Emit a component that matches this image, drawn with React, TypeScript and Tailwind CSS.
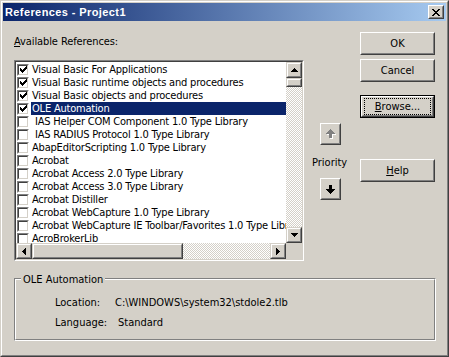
import React from "react"

// pixel patterns for the little classic glyphs
const CHECK = ["......X", ".....XX", "X...XXX", "XX.XXX.", "XXXXX..", ".XXX...", "..X...."]
const CLOSE = ["XX....XX", ".XX..XX.", "..XXXX..", "...XX...", "..XXXX..", ".XX..XX.", "XX....XX"]
const TRI_UP = ["...X...", "..XXX..", ".XXXXX.", "XXXXXXX"]
const TRI_DOWN = ["XXXXXXX", ".XXXXX.", "..XXX..", "...X..."]
const TRI_LEFT = ["...X", "..XX", ".XXX", "XXXX", ".XXX", "..XX", "...X"]
const TRI_RIGHT = ["X...", "XX..", "XXX.", "XXXX", "XXX.", "XX..", "X..."]
const ARROW_UP = ["....X....", "...XXX...", "..XXXXX..", ".XXXXXXX.", "XXXXXXXXX", "...XXX...", "...XXX...", "...XXX...", "...XXX..."]
const ARROW_DOWN = [...ARROW_UP].reverse()

function Pix({ rows, color = "#000", shadow }: { rows: string[]; color?: string; shadow?: string }) {
  const w = rows[0].length + (shadow ? 1 : 0)
  const h = rows.length + (shadow ? 1 : 0)
  const cells: React.ReactNode[] = []
  const draw = (dx: number, fill: string, key: string) =>
    rows.forEach((r, y) =>
      r.split("").forEach((c, x) => {
        if (c === "X") cells.push(<rect key={key + x + "-" + y} x={x + dx} y={y + dx} width={1} height={1} fill={fill} />)
      })
    )
  if (shadow) draw(1, shadow, "s")
  draw(0, color, "m")
  return (
    <svg width={w} height={h} viewBox={`0 0 ${w} ${h}`} shapeRendering="crispEdges" className="block">
      {cells}
    </svg>
  )
}

// raised push button bevel
function PushButton({ children, className = "" }: { children?: React.ReactNode; className?: string }) {
  return (
    <div className={"border border-t-white border-l-white border-r-[#404040] border-b-[#404040] bg-[#d4d0c8] " + className}>
      <div className="h-full w-full border border-t-[#d4d0c8] border-l-[#d4d0c8] border-r-[#808080] border-b-[#808080] flex items-center justify-center">
        {children}
      </div>
    </div>
  )
}

// scrollbar button / thumb bevel
function ScrollPart({ children, className = "" }: { children?: React.ReactNode; className?: string }) {
  return (
    <div className={"border border-t-[#d4d0c8] border-l-[#d4d0c8] border-r-[#404040] border-b-[#404040] bg-[#d4d0c8] " + className}>
      <div className="h-full w-full border border-t-white border-l-white border-r-[#808080] border-b-[#808080] flex items-center justify-center">
        {children}
      </div>
    </div>
  )
}

function CheckBox({ checked }: { checked?: boolean }) {
  return (
    <div className="ml-[1px] w-[12px] h-[12px] shrink-0 border border-t-[#808080] border-l-[#808080] border-r-white border-b-white">
      <div className="h-full w-full border border-t-[#404040] border-l-[#404040] border-r-[#d4d0c8] border-b-[#d4d0c8] bg-white flex items-center justify-center">
        {checked && <Pix rows={CHECK} />}
      </div>
    </div>
  )
}

const refs = [
  { t: "Visual Basic For Applications", c: true },
  { t: "Visual Basic runtime objects and procedures", c: true },
  { t: "Visual Basic objects and procedures", c: true },
  { t: "OLE Automation", c: true, sel: true },
  { t: " IAS Helper COM Component 1.0 Type Library" },
  { t: " IAS RADIUS Protocol 1.0 Type Library" },
  { t: "AbapEditorScripting 1.0 Type Library" },
  { t: "Acrobat" },
  { t: "Acrobat Access 2.0 Type Library" },
  { t: "Acrobat Access 3.0 Type Library" },
  { t: "Acrobat Distiller" },
  { t: "Acrobat WebCapture 1.0 Type Library" },
  { t: "Acrobat WebCapture IE Toolbar/Favorites 1.0 Type Library" },
  { t: "AcroBrokerLib" },
]

const dither = "bg-[conic-gradient(#ffffff_25%,#d4d0c8_0_50%,#ffffff_0_75%,#d4d0c8_0)] bg-[length:2px_2px]"

export default function App() {
  return (
    <div className="w-[449px] h-[357px] border border-t-[#d4d0c8] border-l-[#d4d0c8] border-r-[#404040] border-b-[#404040] font-['DejaVu_Sans_Condensed','Liberation_Sans',Arial,sans-serif] text-[11px] leading-[13px] text-black select-none">
      <div className="h-full border border-t-white border-l-white border-r-[#808080] border-b-[#808080] bg-[#d4d0c8] p-[1px] flex flex-col">
        {/* Title bar */}
        <div className="h-[18px] shrink-0 flex items-center bg-[linear-gradient(to_right,#0a246a,#a6caf0)] pl-[2px] pr-[2px]">
          <span className="flex-1 text-white font-bold tracking-[0.4px] leading-[18px] font-['Liberation_Sans',Arial,sans-serif]">References - Project1</span>
          <PushButton className="w-[16px] h-[14px]">
            <Pix rows={CLOSE} />
          </PushButton>
        </div>

        {/* Client */}
        <div className="flex-1 pl-[11px] pt-[11px]">
          <div className="flex items-start">
            {/* Available references */}
            <div className="w-[290px] flex flex-col">
              <div className="mt-[3px] h-[13px] tracking-[-0.1px]">
                <u>A</u>vailable References:
              </div>
              <div className="mt-[12px] h-[201px] border border-t-[#808080] border-l-[#808080] border-r-white border-b-white">
                <div className="h-full border border-t-[#404040] border-l-[#404040] border-r-[#d4d0c8] border-b-[#d4d0c8] flex flex-col">
                  <div className="flex h-[181px]">
                    <div className="w-[270px] bg-white pt-[1px] overflow-hidden tracking-[-0.2px]">
                      {refs.map((r) => (
                        <div key={r.t} className="h-[13px] flex items-center">
                          <CheckBox checked={r.c} />
                          <div
                            className={
                              "ml-[2px] pl-[1px] flex-1 min-w-0 h-[13px] whitespace-pre overflow-hidden " +
                              (r.sel ? "bg-[#0a246a] text-white" : "")
                            }
                          >
                            {r.t}
                          </div>
                        </div>
                      ))}
                    </div>
                    <div className="w-[16px] flex flex-col">
                      <ScrollPart className="h-[16px]">
                        <Pix rows={TRI_UP} />
                      </ScrollPart>
                      <ScrollPart className="h-[9px]" />
                      <div className={"flex-1 " + dither} />
                      <ScrollPart className="h-[16px]">
                        <Pix rows={TRI_DOWN} />
                      </ScrollPart>
                    </div>
                  </div>
                  <div className="flex h-[16px]">
                    <ScrollPart className="w-[16px]">
                      <Pix rows={TRI_LEFT} />
                    </ScrollPart>
                    <ScrollPart className="w-[151px]" />
                    <div className={"flex-1 " + dither} />
                    <ScrollPart className="w-[16px]">
                      <Pix rows={TRI_RIGHT} />
                    </ScrollPart>
                    <div className="w-[16px] bg-[#d4d0c8]" />
                  </div>
                </div>
              </div>
            </div>

            {/* Priority */}
            <div className="ml-[8px] w-[36px] flex flex-col">
              <PushButton className="mt-[91px] ml-[8px] w-[21px] h-[22px]">
                <Pix rows={ARROW_UP} color="#808080" shadow="#ffffff" />
              </PushButton>
              <div className="mt-[11px] h-[13px]">Priority</div>
              <PushButton className="mt-[9px] ml-[8px] w-[21px] h-[22px]">
                <Pix rows={ARROW_DOWN} />
              </PushButton>
            </div>

            {/* Buttons */}
            <div className="ml-[12px] w-[75px] flex flex-col">
              <PushButton className="h-[23px]">OK</PushButton>
              <PushButton className="mt-[4px] h-[23px]">Cancel</PushButton>
              <div className="mt-[13px] h-[23px] border border-black">
                <PushButton className="h-full">
                  <div className="h-full w-full m-[1px] border border-dotted border-black flex items-center justify-center">
                    <span>
                      <u>B</u>rowse...
                    </span>
                  </div>
                </PushButton>
              </div>
              <PushButton className="mt-[41px] h-[23px]">
                <span>
                  <u>H</u>elp
                </span>
              </PushButton>
            </div>
          </div>

          {/* Selected reference details */}
          <div className="relative mt-[17px] w-[422px] h-[63px] border border-t-[#808080] border-l-[#808080] border-r-white border-b-white">
            <div className="h-full border border-t-white border-l-white border-r-[#808080] border-b-[#808080] pl-[39px] pt-[16px]">
              <div className="flex h-[13px]">
                <span className="w-[60px]">Location:</span>
                <span>C:\WINDOWS\system32\stdole2.tlb</span>
              </div>
              <div className="flex h-[13px] mt-[7px]">
                <span className="w-[60px]">Language:</span>
                <span className="pl-[3px]">Standard</span>
              </div>
            </div>
            <span className="absolute left-[6px] top-[-6px] px-[2px] bg-[#d4d0c8]">OLE Automation</span>
          </div>
        </div>
      </div>
    </div>
  )
}
